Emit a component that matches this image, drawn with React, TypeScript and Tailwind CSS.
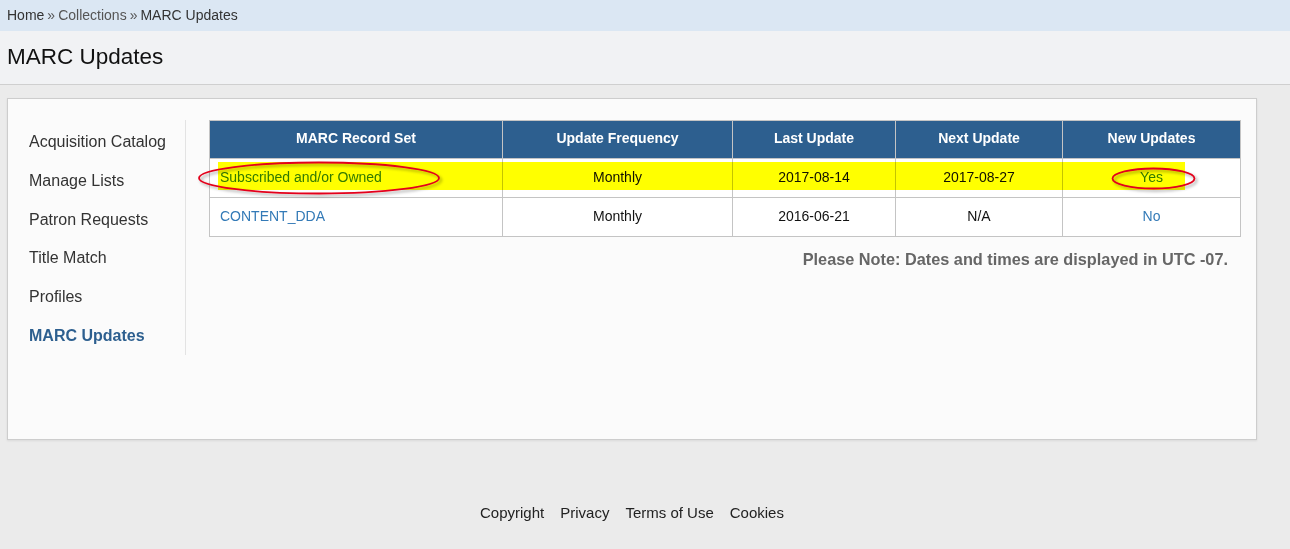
import React from "react";

const font = { fontFamily: '"Liberation Sans", Arial, sans-serif' };

function Annotations() {
  return (
    <>
      <div className="pointer-events-none absolute left-[9px] top-[42px] h-[28px] w-[967px] bg-[#ffff00] mix-blend-multiply" />
      <svg
        className="pointer-events-none absolute left-0 top-0 overflow-visible"
        width="1031"
        height="116"
      >
        <defs>
          <filter id="sh" x="-20%" y="-50%" width="140%" height="200%">
            <feDropShadow dx="2" dy="2" stdDeviation="1.5" floodColor="#000" floodOpacity="0.35" />
          </filter>
        </defs>
        <ellipse cx="110" cy="58" rx="120" ry="15.5" fill="none" stroke="#e3001b" strokeWidth="1.8" filter="url(#sh)" />
        <ellipse cx="944.5" cy="58.5" rx="41" ry="10" fill="none" stroke="#e3001b" strokeWidth="1.8" filter="url(#sh)" />
      </svg>
    </>
  );
}

export default function App() {
  const side = ["Acquisition Catalog", "Manage Lists", "Patron Requests", "Title Match", "Profiles"];
  return (
    <div style={font} className="min-h-[549px] w-full bg-[#ebebeb] text-[#333]">
      <div className="flex h-[31px] items-center bg-[#dbe7f3] pl-[7px] text-[14px] text-[#333]">
        <span className="text-[#333]">Home</span>
        <span className="mx-[3px] text-[#555]">»</span>
        <span className="text-[#555]">Collections</span>
        <span className="mx-[3px] text-[#555]">»</span>
        <span>MARC Updates</span>
      </div>
      <div className="flex h-[54px] items-center border-b border-[#cfcfcf] bg-[#f1f2f4] pl-[7px]">
        <h1 className="pb-[1px] text-[22.5px] font-normal text-[#111]">MARC Updates</h1>
      </div>
      <div className="pt-[13px] pl-[7px]">
        <div className="flex h-[342px] w-[1250px] border border-[#cdcdcd] bg-[#fbfbfb] pt-[21px] pr-[15px] shadow-[0_1px_2px_rgba(0,0,0,0.08)]">
          <div className="flex h-[235px] w-[178px] shrink-0 flex-col border-r border-[#e3e3e3] pl-[21px] pt-[3px]">
            {side.map((s) => (
              <div key={s} className="flex h-[39px] items-center text-[16px] text-[#333]">
                {s}
              </div>
            ))}
            <div className="flex h-[39px] items-center text-[16px] font-bold text-[#2d5f8f]">MARC Updates</div>
          </div>
          <div className="ml-[23px] flex flex-col">
            <div className="relative">
              <table className="w-[1031px] table-fixed border-collapse text-[14px]">
                <colgroup>
                  <col className="w-[293px]" />
                  <col className="w-[230px]" />
                  <col className="w-[163px]" />
                  <col className="w-[167px]" />
                  <col className="w-[178px]" />
                </colgroup>
                <thead>
                  <tr className="h-[38px] bg-[#2d5f8f] text-white">
                    <th className="border border-[#c4c4c4] pb-[2px] font-bold">MARC Record Set</th>
                    <th className="border border-[#c4c4c4] pb-[2px] font-bold">Update Frequency</th>
                    <th className="border border-[#c4c4c4] pb-[2px] font-bold">Last Update</th>
                    <th className="border border-[#c4c4c4] pb-[2px] font-bold">Next Update</th>
                    <th className="border border-[#c4c4c4] pb-[2px] font-bold">New Updates</th>
                  </tr>
                </thead>
                <tbody className="bg-white text-[#111]">
                  <tr className="h-[39px]">
                    <td className="border border-[#c4c4c4] pb-[2px] pl-[10px] text-[#337ab7]">Subscribed and/or Owned</td>
                    <td className="border border-[#c4c4c4] pb-[2px] text-center">Monthly</td>
                    <td className="border border-[#c4c4c4] pb-[2px] text-center">2017-08-14</td>
                    <td className="border border-[#c4c4c4] pb-[2px] text-center">2017-08-27</td>
                    <td className="border border-[#c4c4c4] pb-[2px] text-center text-[#337ab7]">Yes</td>
                  </tr>
                  <tr className="h-[39px]">
                    <td className="border border-[#c4c4c4] pb-[2px] pl-[10px] text-[#337ab7]">CONTENT_DDA</td>
                    <td className="border border-[#c4c4c4] pb-[2px] text-center">Monthly</td>
                    <td className="border border-[#c4c4c4] pb-[2px] text-center">2016-06-21</td>
                    <td className="border border-[#c4c4c4] pb-[2px] text-center">N/A</td>
                    <td className="border border-[#c4c4c4] pb-[2px] text-center text-[#337ab7]">No</td>
                  </tr>
                </tbody>
              </table>
              <Annotations />
            </div>
            <div className="mt-[10px] pr-[13px] text-right text-[16.3px] font-bold text-[#666]">
              Please Note: Dates and times are displayed in UTC -07.
            </div>
          </div>
        </div>
        <div className="mt-[62px] flex w-[1250px] justify-center gap-[16px] text-[15px] text-[#222]">
          <span>Copyright</span>
          <span>Privacy</span>
          <span>Terms of Use</span>
          <span>Cookies</span>
        </div>
      </div>
    </div>
  );
}
